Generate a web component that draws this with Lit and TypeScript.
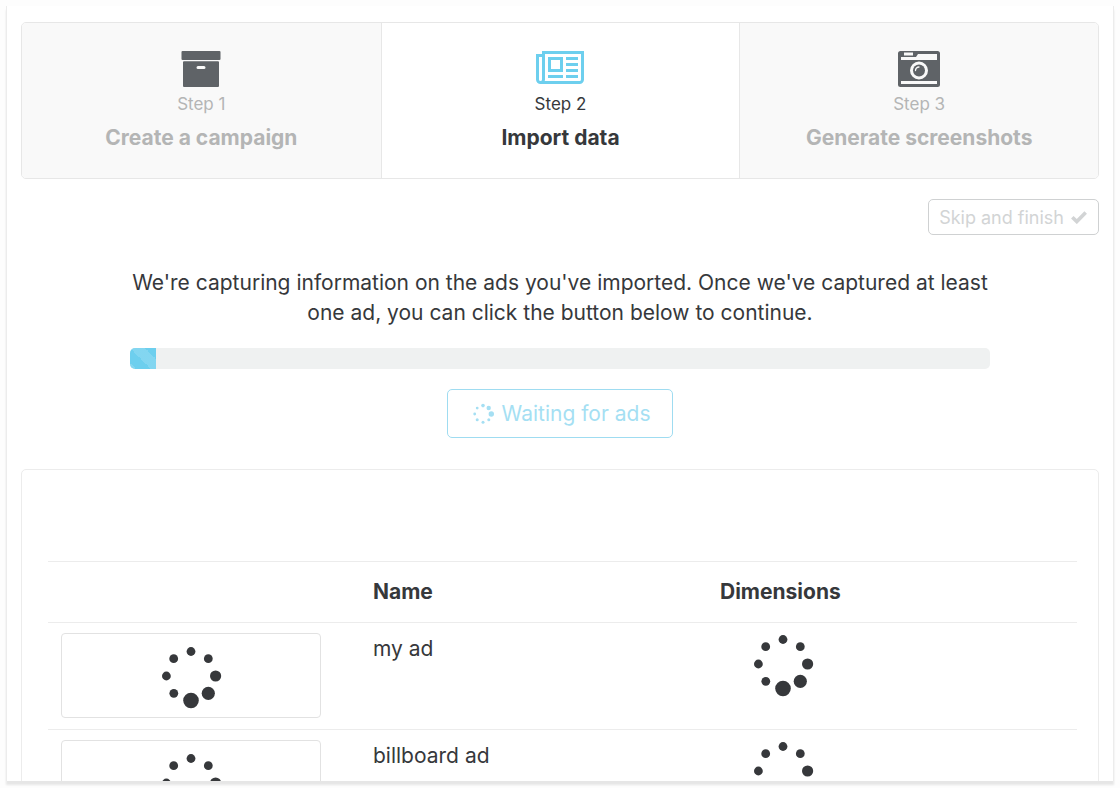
import { LitElement, html, css, svg } from "lit";
import { customElement, property } from "lit/decorators.js";

type Dot = [number, number, number];

const RING_LARGE: Dot[] = [
  [31, 6.5, 4.4], [48.3, 13.7, 4.4], [55.6, 31, 5.6], [48.3, 48.3, 6.6],
  [31, 55.5, 7.8], [13.8, 48.3, 4.4], [6.4, 31, 4.4], [13.7, 13.7, 4.4],
];
const RING_SMALL: Dot[] = [
  [11, 2.6, 1.8], [16.7, 5, 2.2], [19.3, 11, 2.7], [16.8, 16.8, 1.5],
  [11, 19.3, 1.5], [5.2, 16.8, 1.5], [2.7, 11, 1.4], [5.2, 5.1, 1.4],
];

@customElement("dot-spinner")
export class DotSpinner extends LitElement {
  @property({ type: Boolean }) small = false;

  static styles = css`
    :host { display: block; }
    .ring { display: block; width: 62px; height: 62px; fill: #36383b; overflow: visible; }
    .ring.small { width: 22px; height: 22px; fill: #a5dff3; }
  `;

  render() {
    const box = this.small ? 22 : 62;
    const dots = this.small ? RING_SMALL : RING_LARGE;
    return html`<svg class="ring ${this.small ? "small" : ""}" viewBox="0 0 ${box} ${box}" aria-hidden="true">
      ${dots.map(([x, y, r]) => svg`<circle cx=${x} cy=${y} r=${r} />`)}
    </svg>`;
  }
}

const archiveIcon = html`<svg class="icon" width="40" height="36" viewBox="0 0 40 36" aria-hidden="true">
  <rect x="0.5" y="0" width="39" height="9" rx="1" />
  <path fill-rule="evenodd" d="M3 10.3H37a1 1 0 0 1 1 1V35a1 1 0 0 1-1 1H3a1 1 0 0 1-1-1V11.300a1 1 0 0 1 1-1ZM17 15a1.500 1.500 0 0 0 0 3h6a1.500 1.500 0 0 0 0-3Z" />
</svg>`;

const newspaperIcon = html`<svg class="icon" width="48" height="36" viewBox="0 0 48 36" aria-hidden="true">
  <path fill="none" stroke="currentColor" stroke-width="3" d="M7.500 4.500H1.500V28.500a3 3 0 0 0 6 0V1.500H46.500V28.500a3 3 0 0 1-3 3H4.500" />
  <path fill="none" stroke="currentColor" stroke-width="3" d="M13.500 7.500H25.500V19.500H13.500Z" />
  <path fill="none" stroke="currentColor" stroke-width="3" d="M30 7.500H42M30 13.500H42M30 19.500H42M30 25.500H42M12 25.500H27" />
</svg>`;

const cameraIcon = html`<svg class="icon" width="42" height="36" viewBox="0 0 42 36" aria-hidden="true">
  <path fill-rule="evenodd" d="M2.500 0H39.500A2.500 2.500 0 0 1 42 2.500V33.500A2.500 2.500 0 0 1 39.500 36H2.500A2.500 2.500 0 0 1 0 33.500V2.500A2.500 2.500 0 0 1 2.500 0ZM6 1.500V4.500H15V1.500ZM3 6V9H39V3H20L18 6ZM3 30V33H39V30ZM21 10.500a9 9 0 1 0 0 18a9 9 0 1 0 0-18Z" />
  <circle cx="21" cy="19.500" r="6" />
  <path fill="none" stroke="#f9f9f9" stroke-width="1.300" stroke-linecap="round" d="M17.500 19.500a3.500 3.500 0 0 1 3.500-3.500" />
</svg>`;

const checkIcon = html`<svg class="check" width="16" height="13" viewBox="0 0 16 13" aria-hidden="true">
  <path fill="none" stroke="currentColor" stroke-width="3.600" d="M1.300 6.300L5.800 10.600L14.700 1.600" />
</svg>`;

const STEPS = [
  { label: "Step 1", title: "Create a campaign", icon: archiveIcon, active: false },
  { label: "Step 2", title: "Import data", icon: newspaperIcon, active: true },
  { label: "Step 3", title: "Generate screenshots", icon: cameraIcon, active: false },
];

const ADS = ["my ad", "billboard ad"];

@customElement("app-root")
export class AppRoot extends LitElement {
  @property({ type: Number }) progress = 3;

  static styles = css`
    :host {
      display: block;
      box-sizing: border-box;
      height: 100vh;
      padding: 6px 6px 7px;
      background: #fdfdfd;
      overflow: hidden;
      color: #36383b;
      font: 21px/30px Inter, "Liberation Sans", sans-serif;
    }
    *, *::before, *::after { box-sizing: border-box; }
    .window {
      height: 100%;
      padding: 16px 14px 0;
      background: #fff;
      border-left: 1px solid #ececec;
      border-right: 1px solid #ececec;
      box-shadow: 0 4px 2px #e6e6e6;
      overflow: hidden;
    }
    .steps {
      display: grid;
      grid-template-columns: 1fr 1fr 1fr;
      margin: 0;
      padding: 0;
      list-style: none;
      border: 1px solid #e7e7e7;
      border-radius: 5px;
      overflow: hidden;
    }
    .step {
      display: flex;
      flex-direction: column;
      align-items: center;
      padding: 28px 12px 24px;
      background: #f9f9f9;
      color: #b4b5b5;
    }
    .step + .step { border-left: 1px solid #e7e7e7; }
    .step.active { background: #fff; color: #36383b; }
    .icon { display: block; fill: #5f6367; }
    .active .icon { color: #6dcfee; }
    .label { margin-top: 4px; font-size: 17px; line-height: 26px; }
    .title { margin: 5px 0 0; font-size: 21px; line-height: 32px; font-weight: 700; }
    .toolbar { display: flex; justify-content: flex-end; margin-top: 20px; }
    button { font-family: inherit; background: #fff; border-radius: 5px; }
    .skip {
      display: flex;
      align-items: center;
      gap: 7px;
      height: 36px;
      padding: 0 11px 0 10px;
      border: 1px solid #cfd1d2;
      color: #d2d4d5;
      font-size: 18px;
    }
    .status {
      display: flex;
      flex-direction: column;
      align-items: center;
      width: 80%;
      max-width: 860px;
      margin: 33px auto 0;
    }
    .lead { margin: 0; text-align: center; }
    .progress {
      width: 100%;
      height: 21px;
      margin: 20px 0;
      border-radius: 5px;
      background: #eff1f1;
      overflow: hidden;
    }
    .bar {
      height: 100%;
      background: #6dcfee linear-gradient(45deg, rgba(255,255,255,.15) 25%, transparent 25%, transparent 50%, rgba(255,255,255,.15) 50%, rgba(255,255,255,.15) 75%, transparent 75%) 0 0 / 30px 30px;
    }
    .wait {
      display: flex;
      align-items: center;
      gap: 8px;
      height: 49px;
      padding: 0 22px 0 24px;
      border: 1px solid #9fdcf1;
      color: #a5dff3;
      font-size: 21px;
    }
    .panel {
      margin-top: 31px;
      padding: 91px 21px 27px 26px;
      border: 1px solid #ececec;
      border-radius: 5px;
    }
    table { width: 100%; border-collapse: collapse; table-layout: fixed; }
    .thumb-col { width: 312px; }
    .name-col { width: 347px; }
    th, td { border-top: 1px solid #ececec; padding: 10px 13px; text-align: left; vertical-align: top; }
    td { height: 107px; }
    td + td { line-height: 32px; }
    th { padding: 15px 13px; font-weight: 700; }
    .thumb {
      display: flex;
      align-items: center;
      justify-content: center;
      width: 260px;
      height: 85px;
      border: 1px solid #e2e2e2;
      border-radius: 4px;
    }
    .size { display: flex; justify-content: center; width: 126px; }
  `;

  render() {
    return html`<main class="window">
      <ol class="steps">
        ${STEPS.map((s) => html`<li class="step ${s.active ? "active" : ""}">
          ${s.icon}
          <span class="label">${s.label}</span>
          <h2 class="title">${s.title}</h2>
        </li>`)}
      </ol>
      <div class="toolbar">
        <button class="skip" type="button" disabled>Skip and finish ${checkIcon}</button>
      </div>
      <section class="status">
        <p class="lead">We're capturing information on the ads you've imported. Once we've captured at least one ad, you can click the button below to continue.</p>
        <div class="progress" role="progressbar" aria-label="Ads captured" aria-valuemin="0" aria-valuemax="100" aria-valuenow=${this.progress}>
          <div class="bar" style="width: ${this.progress}%"></div>
        </div>
        <button class="wait" type="button" disabled><dot-spinner small></dot-spinner>Waiting for ads</button>
      </section>
      <section class="panel">
        <table>
          <colgroup><col class="thumb-col" /><col class="name-col" /><col /></colgroup>
          <thead>
            <tr><th></th><th scope="col">Name</th><th scope="col">Dimensions</th></tr>
          </thead>
          <tbody>
            ${ADS.map((name) => html`<tr>
              <td><div class="thumb"><dot-spinner></dot-spinner></div></td>
              <td>${name}</td>
              <td><div class="size"><dot-spinner></dot-spinner></div></td>
            </tr>`)}
          </tbody>
        </table>
      </section>
    </main>`;
  }
}
